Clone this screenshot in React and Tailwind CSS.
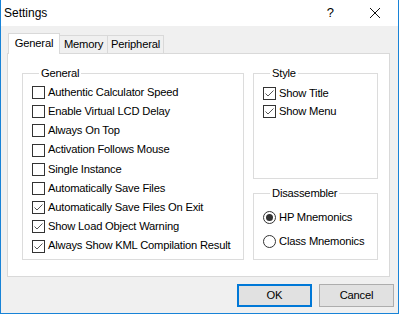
import React from 'react';

const generalOptions = [
  { label: 'Authentic Calculator Speed', checked: false },
  { label: 'Enable Virtual LCD Delay', checked: false },
  { label: 'Always On Top', checked: false },
  { label: 'Activation Follows Mouse', checked: false },
  { label: 'Single Instance', checked: false },
  { label: 'Automatically Save Files', checked: false },
  { label: 'Automatically Save Files On Exit', checked: true },
  { label: 'Show Load Object Warning', checked: true },
  { label: 'Always Show KML Compilation Result', checked: true },
];

const Checkbox = ({ label, checked }) => (
  <div className="flex items-center h-[13px] gap-[3px]">
    <div className="w-[13px] h-[13px] border border-[#333333] bg-white flex items-center justify-center shrink-0">
      {checked && (
        <svg width="11" height="11" viewBox="0 0 11 11">
          <path d="M1.5 5.5 L4 8 L9.5 2.5" fill="none" stroke="#555" strokeWidth="1" />
        </svg>
      )}
    </div>
    <span className="leading-none whitespace-nowrap">{label}</span>
  </div>
);

const Radio = ({ label, checked }) => (
  <div className="flex items-center h-[13px] gap-[3px]">
    <div className="w-[13px] h-[13px] rounded-full border border-[#333333] bg-white flex items-center justify-center shrink-0">
      {checked && <div className="w-[7px] h-[7px] rounded-full bg-[#333333]" />}
    </div>
    <span className="leading-none whitespace-nowrap">{label}</span>
  </div>
);

const Group = ({ title, className, children }) => (
  <fieldset className={`border border-[#dcdcdc] ${className}`}>
    <legend className="ml-[7px] px-[2px] leading-[14px]">{title}</legend>
    {children}
  </fieldset>
);

export default function App() {
  return (
    <div
      className="w-[399px] h-[314px] flex flex-col border-x border-b border-[#1883d7] bg-[#f0f0f0] text-black text-[11.2px] tracking-[-0.2px]"
      style={{ fontFamily: '"Liberation Sans", Arial, sans-serif' }}
    >
      {/* Title bar */}
      <div className="h-[26px] bg-white flex items-center shrink-0 tracking-normal">
        <span className="ml-[3px] text-[12px]">Settings</span>
        <span className="ml-auto mr-[35px] text-[13px]">?</span>
        <svg width="12" height="12" viewBox="0 0 12 12" className="mr-[17px]">
          <path d="M1 1 L11 11 M11 1 L1 11" stroke="#111" strokeWidth="1" />
        </svg>
      </div>

      {/* Body */}
      <div className="flex-1 flex flex-col pt-[7px] pl-[6px] pr-[6px]">
        {/* Tabs */}
        <div className="flex items-end h-[20px] ml-[1px] relative z-10">
          <div className="w-[52px] h-[21px] -mb-[1px] bg-white border-x border-t border-[#d9d9d9] flex items-center justify-center pb-[2px]">
            General
          </div>
          <div className="w-[48px] h-[18px] border-t border-r border-[#d9d9d9] flex items-center justify-center">Memory</div>
          <div className="w-[56px] h-[18px] border-t border-r border-[#d9d9d9] flex items-center justify-center">Peripheral</div>
        </div>

        {/* Panel */}
        <div className="w-[383px] h-[224px] bg-white border border-[#d9d9d9] flex pt-[12px] pl-[14px] gap-[9px]">
          <Group title="General" className="w-[222px] h-[194px] pl-[9px] pt-[6px]">
            <div className="flex flex-col gap-y-[6.2px]">
              {generalOptions.map((o) => (
                <Checkbox key={o.label} label={o.label} checked={o.checked} />
              ))}
            </div>
          </Group>
          <div className="flex flex-col gap-[7px]">
            <Group title="Style" className="w-[125px] h-[113px] pl-[9px] pt-[7px]">
              <div className="flex flex-col gap-y-[5px]">
                <Checkbox label="Show Title" checked />
                <Checkbox label="Show Menu" checked />
              </div>
            </Group>
            <Group title="Disassembler" className="w-[125px] h-[74px] pl-[9px] pt-[11px]">
              <div className="flex flex-col gap-y-[11px]">
                <Radio label="HP Mnemonics" checked />
                <Radio label="Class Mnemonics" />
              </div>
            </Group>
          </div>
        </div>

        {/* Buttons */}
        <div className="flex justify-end gap-[7px] mt-[7px] -mr-[2px]">
          <button className="w-[75px] h-[23px] bg-[#e1e1e1] border-2 border-[#0078d7] flex items-center justify-center">
            OK
          </button>
          <button className="w-[75px] h-[23px] bg-[#e1e1e1] border border-[#adadad] flex items-center justify-center">
            Cancel
          </button>
        </div>
      </div>
    </div>
  );
}
